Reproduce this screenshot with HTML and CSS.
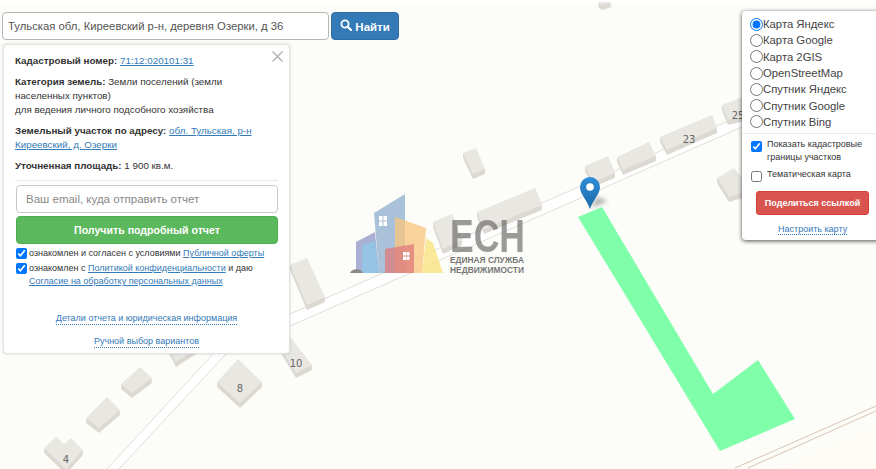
FILE: index.html
```html
<!DOCTYPE html>
<html lang="ru">
<head>
    <meta charset="UTF-8">
    <meta name="viewport" content="width=device-width, initial-scale=1.0">
    <title>Кадастровая карта</title>
    <link rel="stylesheet" href="styles.css">
</head>
<body>

<div class="map">
    <svg class="map-canvas" width="876" height="469" viewBox="0 0 876 469">
        <rect class="ground" y="4" width="876" height="465"/>
        <polygon class="ground-far" points="782,469 876,427 876,469"/>
        <!-- дороги -->
        <g class="road">
            <polygon points="290,314 876,56 876,68 290,326"/>
            <polygon points="242,322 255,322 119,469 107,469"/>
        </g>
        <g class="road-line">
            <path d="M290 314L876 56M290 326L876 68"/>
            <path d="M213 354L107 469M226 354L119 469"/>
        </g>
        <g class="fence">
            <path d="M735 468L876 406M748 468L876 411"/>
        </g>

        <!-- дома -->
        <g class="house">
            <polygon points="660,137 712,115 717,128 667,150"/>
            <polygon points="617,157 649,142 656,156 623,170"/>
            <polygon points="585,166 608,156 615,173 593,182"/>
            <polygon points="722,105 745,96 745,116 728,120"/>
            <polygon points="717,178 734,168 745,182 745,192 729,197"/>
            <polygon points="598,2 612,2 602,5"/>
            <polygon points="477,212 535,188 542,205 484,229"/>
            <polygon points="433,222 452,214 462,240 443,249"/>
            <polygon points="463,153 476,148 485,169 473,174"/>
            <polygon points="290,265 307,258 325,297 307,305"/>
            <polygon points="285,330 312,365 296,373 282,350"/>
            <polygon points="238,359 262,382 240,403 217,382"/>
            <polygon points="140,367 152,378 132,393 121,384"/>
            <polygon points="107,397 120,410 99,428 86,418"/>
            <polygon points="56,437 64,444 71,438 83,450 66,469 44,448"/>
            <polygon points="165,340 210,340 176,362"/>
        </g>
        <text class="house-num" x="689" y="143">23</text>
        <text class="house-num" x="738" y="119">25</text>
        <text class="house-num" x="240" y="392">8</text>
        <text class="house-num" x="296" y="367">10</text>
        <text class="house-num" x="66" y="463">4</text>

        <!-- участок -->
        <polygon class="plot" points="578,217 602,207 713,394 758,360 795,419 720,451"/>

        <!-- логотип -->
        <g class="logo">
            <polygon fill="#8f96c8" points="356,242 375,232 379,273 356,273"/>
            <polygon fill="#8dc9ea" points="362,245 375,241 379,273 362,273"/>
            <polygon fill="#8fadd0" points="374,213 405,194 405,273 379,273"/>
            <polygon fill="#fac47c" points="395,217 426,228 422,273 395,273"/>
            <polygon fill="#fae27a" points="426,238 433,243 443,273 422,273"/>
            <polygon fill="#dd7a7a" points="385,249 414,244 414,273 385,273"/>
            <path fill="#888" d="M350 273a7 6 0 0 1 13 0z"/>
            <g fill="#fff">
                <rect x="379" y="216" width="3.500" height="4.500"/>
                <rect x="383.500" y="216" width="3.500" height="4.500"/>
                <rect x="379" y="221.500" width="3.500" height="4.500"/>
                <rect x="383.500" y="221.500" width="3.500" height="4.500"/>
                <rect x="403" y="252" width="3" height="3.500"/>
                <rect x="406.500" y="252" width="3" height="3.500"/>
                <rect x="403" y="256.500" width="3" height="3.500"/>
                <rect x="406.500" y="256.500" width="3" height="3.500"/>
            </g>
            <text class="logo-name" x="450" y="252" textLength="75" lengthAdjust="spacingAndGlyphs">ЕСН</text>
            <text class="logo-sub" x="450" y="263" textLength="74" lengthAdjust="spacingAndGlyphs">ЕДИНАЯ СЛУЖБА</text>
            <text class="logo-sub" x="450" y="273" textLength="74" lengthAdjust="spacingAndGlyphs">НЕДВИЖИМОСТИ</text>
        </g>

        <!-- метка -->
        <polygon class="pin-shadow" points="591,208 597,197 608,201"/>
        <defs>
            <linearGradient id="pinFill" x1="0" y1="0" x2="0" y2="1">
                <stop offset="0" stop-color="#2f8fd8"/>
                <stop offset="1" stop-color="#1c6aa8"/>
            </linearGradient>
        </defs>
        <path fill="url(#pinFill)" d="M590 209C587 200 580 194 580 187a10 10 0 0 1 20 0C600 194 593 200 590 209z"/>
        <circle cx="590" cy="187" r="3.800" fill="#fff"/>
    </svg>

    <form class="search">
        <input class="search-input" type="text" value="Тульская обл, Киреевский р-н, деревня Озерки, д 36">
        <button class="search-btn" type="button">
            <svg width="12" height="12" viewBox="0 0 12 12"><circle cx="5" cy="5" r="3.600" fill="none" stroke="#fff" stroke-width="1.800"/><path d="M7.700 7.700L11 11" stroke="#fff" stroke-width="2.200" stroke-linecap="round"/></svg>
            Найти
        </button>
    </form>

    <div class="info">
        <svg class="info-close" width="11" height="11" viewBox="0 0 11 11"><path d="M0.500 0.500L10.500 10.500M10.500 0.500L0.500 10.500" stroke="#b5b5b5" stroke-width="1.500"/></svg>
        <p><b>Кадастровый номер:</b> <a href="#">71:12:020101:31</a></p>
        <p><b>Категория земель:</b> Земли поселений (земли населенных пунктов)<br>для ведения личного подсобного хозяйства</p>
        <p><b>Земельный участок по адресу:</b> <a href="#">обл. Тульская, р-н Киреевский, д. Озерки</a></p>
        <p><b>Уточненная площадь:</b> 1 900 кв.м.</p>
        <hr>
        <input class="email" type="text" placeholder="Ваш email, куда отправить отчет">
        <button class="report-btn" type="button">Получить подробный отчет</button>
        <label class="agree"><input type="checkbox" checked><span>ознакомлен и согласен с условиями <a href="#">Публичной оферты</a></span></label>
        <label class="agree"><input type="checkbox" checked><span>ознакомлен с <a href="#">Политикой конфиденциальности</a> и даю <a href="#">Согласие на обработку персональных данных</a></span></label>
        <div class="info-links">
            <a class="dotted" href="#">Детали отчета и юридическая информация</a>
            <a class="dotted" href="#">Ручной выбор вариантов</a>
        </div>
    </div>

    <div class="layers">
        <label class="layer"><input type="radio" name="layer" checked>Карта Яндекс</label>
        <label class="layer"><input type="radio" name="layer">Карта Google</label>
        <label class="layer"><input type="radio" name="layer">Карта 2GIS</label>
        <label class="layer"><input type="radio" name="layer">OpenStreetMap</label>
        <label class="layer"><input type="radio" name="layer">Спутник Яндекс</label>
        <label class="layer"><input type="radio" name="layer">Спутник Google</label>
        <label class="layer"><input type="radio" name="layer">Спутник Bing</label>
        <hr>
        <label class="option"><input type="checkbox" checked><span>Показать кадастровые границы участков</span></label>
        <label class="option"><input type="checkbox"><span>Тематическая карта</span></label>
        <button class="share-btn" type="button">Поделиться ссылкой</button>
        <a class="dotted setup" href="#">Настроить карту</a>
    </div>
</div>

</body>
</html>
```

FILE: styles.css
```css
body {
    margin: 0;
    background-color: #ffffff;
    font-family: "Liberation Sans", Arial, sans-serif;
    color: #333333;
}
a {
    color: #337ab7;
}
hr {
    border: none;
    border-top: 1px solid #e8e8e8;
}
.map {
    position: relative;
    width: 876px;
    height: 469px;
    overflow: hidden;
}
.map-canvas {
    position: absolute;
    left: 0;
    top: 0;
    display: block;
}
.ground {
    fill: #fcfcf8;
}
.ground-far {
    fill: #fefcf4;
}
.road polygon {
    fill: #ffffff;
}
.road-line path {
    stroke: #d8d5ce;
    stroke-width: 0.800;
    fill: none;
}
.fence path {
    stroke: #d9c3b4;
    stroke-width: 1;
    fill: none;
}
.house polygon {
    fill: #e9e7e2;
}
.house {
    filter: drop-shadow(0 2px 0 #dcd9d3) drop-shadow(0 2px 0 #dcd9d3) drop-shadow(0 1px 0 #dcd9d3);
}
.house-num {
    font-family: "DejaVu Sans", sans-serif;
    font-size: 10px;
    fill: #666666;
    text-anchor: middle;
}
.plot {
    fill: #80ffaa;
}
.logo > polygon {
    opacity: 0.75;
}
.logo-name {
    font-family: "Liberation Sans", sans-serif;
    font-size: 47px;
    font-weight: bold;
    fill: #666666;
    opacity: 0.65;
}
.logo-sub {
    font-family: "Liberation Sans", sans-serif;
    font-size: 8.500px;
    font-weight: bold;
    fill: #777777;
}
.pin-shadow {
    fill: rgba(0, 0, 0, 0.3);
    filter: blur(2px);
}

.search {
    position: absolute;
    left: 2px;
    top: 12px;
    display: flex;
    gap: 2px;
}
.search-input {
    width: 327px;
    height: 28px;
    box-sizing: border-box;
    padding: 0 5px;
    border: 1px solid #b5b5b5;
    border-radius: 4px;
    font-family: inherit;
    font-size: 11.300px;
    color: #555555;
}
.search-btn {
    width: 68px;
    height: 28px;
    box-sizing: border-box;
    padding: 0;
    background-color: #337ab7;
    border: 1px solid #2e6da4;
    border-radius: 4px;
    color: #ffffff;
    font-family: inherit;
    font-size: 11.500px;
    font-weight: bold;
}

.info {
    position: absolute;
    left: 3px;
    top: 44px;
    width: 287px;
    height: 310px;
    box-sizing: border-box;
    padding: 9px 11px 0;
    background-color: #ffffff;
    border: 1px solid #e2e2e2;
    border-radius: 4px;
    box-shadow: 0 0 3px rgba(0, 0, 0, 0.15);
    font-size: 9.800px;
    line-height: 14px;
}
.info-close {
    position: absolute;
    right: 6px;
    top: 6px;
}
.info p {
    margin: 0 0 7px;
}
.info hr {
    margin: 7px 0 4px;
}
.email {
    display: block;
    width: 262px;
    height: 28px;
    margin-left: 1px;
    box-sizing: border-box;
    padding: 0 9px;
    border: 1px solid #c8c8c8;
    border-radius: 4px;
    font-family: inherit;
    font-size: 11.500px;
}
.email::placeholder {
    color: #888888;
}
.report-btn {
    display: block;
    width: 262px;
    height: 28px;
    margin: 3px 0 3px 1px;
    background-color: #5cb85c;
    border: 1px solid #4cae4c;
    border-radius: 4px;
    color: #ffffff;
    font-family: inherit;
    font-size: 10.600px;
    font-weight: bold;
}
.agree {
    display: flex;
    align-items: flex-start;
    gap: 2px;
    margin-top: 1px;
    margin-left: 1px;
    font-size: 9px;
    line-height: 13.500px;
}
.agree input {
    width: 11px;
    height: 11px;
    margin: 1px 0 0;
    flex: none;
}
.dotted {
    text-decoration: none;
    border-bottom: 1px dotted #337ab7;
}
.info-links {
    display: flex;
    flex-direction: column;
    align-items: center;
    gap: 10px;
    margin-top: 23px;
    font-size: 9px;
    line-height: 12px;
}

.layers {
    position: absolute;
    left: 742px;
    top: 11px;
    width: 140px;
    height: 229px;
    box-sizing: border-box;
    padding: 5px 0 0 8px;
    background-color: #ffffff;
    border-radius: 4px;
    box-shadow: 0 1px 4px rgba(0, 0, 0, 0.7);
}
.layer {
    display: flex;
    align-items: center;
    height: 16.300px;
    font-size: 11.300px;
    color: #444444;
}
.layer input {
    width: 13px;
    height: 13px;
    margin: 0;
    flex: none;
}
.layers hr {
    margin: 3px 0 4px -8px;
}
.option {
    display: flex;
    align-items: flex-start;
    gap: 5px;
    width: 124px;
    margin-bottom: 4px;
    font-size: 9px;
    line-height: 13px;
}
.option input {
    width: 11px;
    height: 11px;
    margin: 3px 0 0 1px;
    flex: none;
}
.share-btn {
    display: block;
    width: 113px;
    height: 24px;
    margin: 9px 0 3px 6px;
    padding: 0;
    background-color: #d9534f;
    border: 1px solid #d43f3a;
    border-radius: 3px;
    color: #ffffff;
    font-family: inherit;
    font-size: 9px;
    font-weight: bold;
}
.setup {
    margin-left: 28px;
    font-size: 9px;
}
```
